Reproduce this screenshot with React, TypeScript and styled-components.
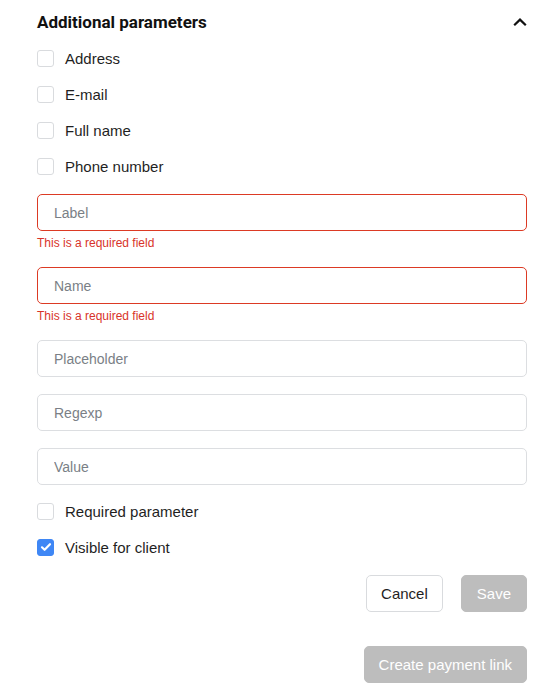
import React, { useState } from 'react';
import styled, { createGlobalStyle } from 'styled-components';

const GlobalStyle = createGlobalStyle`
  body {
    margin: 0;
    background: #ffffff;
    font-family: "Liberation Sans", Arial, sans-serif;
    color: #1f1f1f;
  }
`;

const Panel = styled.div`
  width: 490px;
  padding: 10px 28px 6px 37px;
  display: flex;
  flex-direction: column;
`;

const Header = styled.div`
  display: flex;
  align-items: center;
  justify-content: space-between;
  height: 24px;
  margin-bottom: 6px;
`;

const Title = styled.h2`
  margin: 0;
  font-family: Roboto, "Liberation Sans", sans-serif;
  font-weight: 700;
  font-size: 17px;
  color: #111111;
`;

const Chevron = styled.button`
  border: none;
  background: none;
  padding: 0;
  width: 14px;
  height: 20px;
  display: flex;
  align-items: center;
  justify-content: center;
`;

const CheckRow = styled.label`
  display: flex;
  align-items: center;
  gap: 11px;
  height: 36px;
  font-size: 15px;
  color: #1f1f1f;
  cursor: pointer;
`;

const Box = styled.span<{ $checked?: boolean }>`
  width: 17px;
  height: 17px;
  box-sizing: border-box;
  border-radius: 3px;
  border: 1px solid ${({ $checked }) => ($checked ? '#3f87f5' : '#d9dbde')};
  background: ${({ $checked }) => ($checked ? '#3f87f5' : '#ffffff')};
  display: flex;
  align-items: center;
  justify-content: center;
`;

const Fields = styled.div`
  display: flex;
  flex-direction: column;
  gap: 17px;
  margin: 10px 0 8px;
`;

const Field = styled.div`
  display: flex;
  flex-direction: column;
`;

const Input = styled.input<{ $error?: boolean }>`
  box-sizing: border-box;
  width: 100%;
  height: 37px;
  padding: 0 16px;
  border-radius: 5px;
  border: 1px solid ${({ $error }) => ($error ? '#dc3a24' : '#dcdee1')};
  font-family: "Liberation Sans", Arial, sans-serif;
  font-size: 14px;
  color: #1f1f1f;
  outline: none;

  &::placeholder {
    color: #7a7f86;
  }
`;

const ErrorText = styled.div`
  margin-top: 5px;
  font-size: 12px;
  color: #d8332a;
`;

const Actions = styled.div`
  display: flex;
  justify-content: flex-end;
  gap: 18px;
  margin-top: 10px;
`;

const Button = styled.button<{ $variant?: 'outline' | 'disabled' }>`
  height: 37px;
  padding: 0 ${({ $variant }) => ($variant === 'outline' ? '14px' : '15px')};
  border-radius: 5px;
  font-family: "Liberation Sans", Arial, sans-serif;
  font-size: 15px;
  border: 1px solid ${({ $variant }) => ($variant === 'outline' ? '#d9dbde' : '#bdbdbd')};
  background: ${({ $variant }) => ($variant === 'outline' ? '#ffffff' : '#bdbdbd')};
  color: ${({ $variant }) => ($variant === 'outline' ? '#1f1f1f' : '#ffffff')};
`;

const Footer = styled.div`
  display: flex;
  justify-content: flex-end;
  margin-top: 34px;

  ${Button} {
    padding: 0 14px;
  }
`;

const CheckIcon = () => (
  <svg width="12" height="12" viewBox="0 0 12 12">
    <path d="M2 6.3l2.6 2.5 5.4-5.6" fill="none" stroke="#fff" strokeWidth="2.2" strokeLinecap="round" strokeLinejoin="round" />
  </svg>
);

const Check = ({ label, checked }: { label: string; checked?: boolean }) => (
  <CheckRow>
    <Box $checked={checked}>{checked && <CheckIcon />}</Box>
    {label}
  </CheckRow>
);

export default function App() {
  const [open] = useState(true);

  return (
    <>
      <GlobalStyle />
      <Panel>
        <Header>
          <Title>Additional parameters</Title>
          <Chevron aria-label="collapse">
            <svg width="14" height="10" viewBox="0 0 14 10">
              <path d="M1.2 8.3L7 2.6 12.8 8.3" fill="none" stroke="#111" strokeWidth="2.2" />
            </svg>
          </Chevron>
        </Header>
        {open && (
          <>
            <Check label="Address" />
            <Check label="E-mail" />
            <Check label="Full name" />
            <Check label="Phone number" />
            <Fields>
              <Field>
                <Input $error placeholder="Label" />
                <ErrorText>This is a required field</ErrorText>
              </Field>
              <Field>
                <Input $error placeholder="Name" />
                <ErrorText>This is a required field</ErrorText>
              </Field>
              <Input placeholder="Placeholder" />
              <Input placeholder="Regexp" />
              <Input placeholder="Value" />
            </Fields>
            <Check label="Required parameter" />
            <Check label="Visible for client" checked />
            <Actions>
              <Button $variant="outline">Cancel</Button>
              <Button $variant="disabled" disabled>Save</Button>
            </Actions>
          </>
        )}
        <Footer>
          <Button $variant="disabled" disabled>Create payment link</Button>
        </Footer>
      </Panel>
    </>
  );
}
